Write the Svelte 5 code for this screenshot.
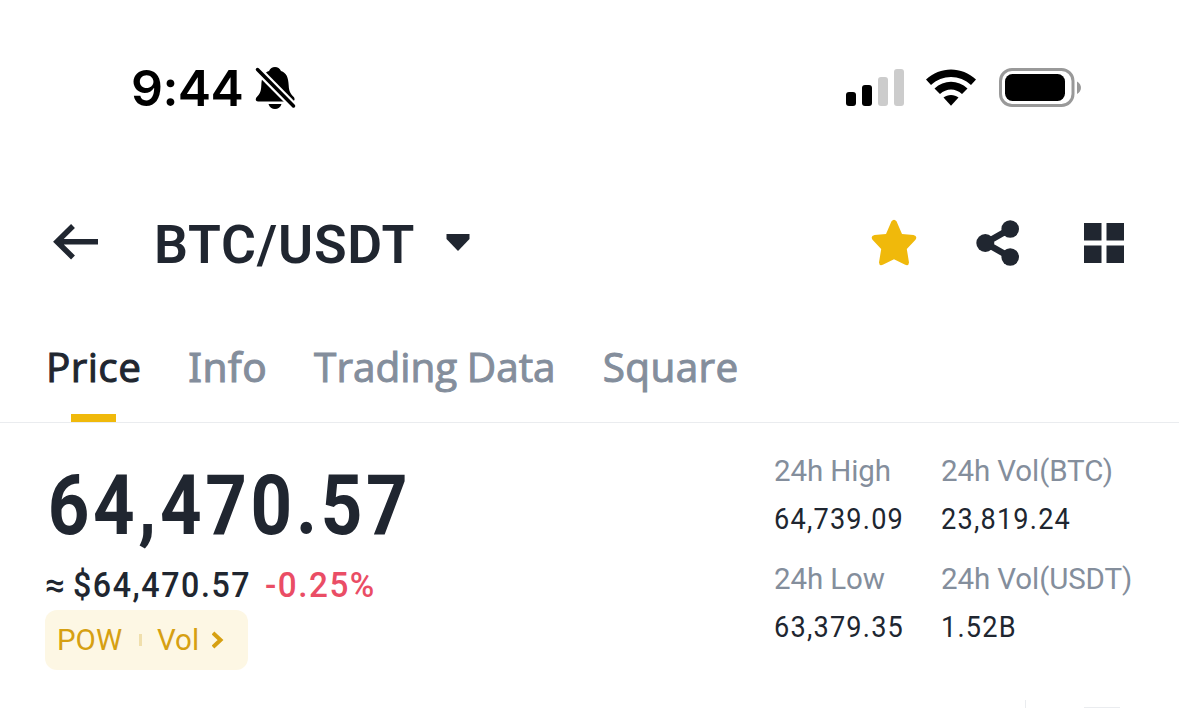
<script lang="ts">
  interface Stat { label: string; value: string; key: string }

  let activeTab = $state('Price')
  let favorite = $state(true)

  const tabs = ['Price', 'Info', 'Trading Data', 'Square']
  const stats: Stat[] = [
    { key: 'high', label: '24h High', value: '64,739.09' },
    { key: 'vol-btc', label: '24h Vol(BTC)', value: '23,819.24' },
    { key: 'low', label: '24h Low', value: '63,379.35' },
    { key: 'vol-usdt', label: '24h Vol(USDT)', value: '1.52B' },
  ]
</script>

<main class="screen">
  <div class="status-bar">
    <span class="time">9:44</span>
    <svg class="bell" width="42" height="46" viewBox="0 0 42 46">
      <path d="M3 36.500C0.500 36.500 0 34 2 31.800C5.500 28 6 26 6.300 20.500C6.700 12 8.500 8 14 6C15.300 3.300 17.200 2 20 2S24.700 3.300 26 6C31.500 8 33.300 12 33.700 20.500C34 26 35 28 38.500 31.800C40.500 34 39.500 36.500 37 36.500Z" />
      <path d="M13.500 39H26.500C25.500 42.500 23 44 20 44S14.500 42.500 13.500 39Z" />
      <path class="slash-gap" d="M1 3L39 41.500" />
      <path class="slash" d="M2.500 4.500L38.500 41" />
    </svg>
    <div class="device">
      <svg width="60" height="38" viewBox="0 0 60 38">
        <rect x="1" y="23" width="10" height="14" rx="3" />
        <rect x="17" y="16" width="10" height="21" rx="3" />
        <rect class="weak" x="33" y="8" width="10" height="29" rx="3" />
        <rect class="weak" x="49" y="0" width="10" height="37" rx="3" />
      </svg>
      <svg class="wifi" width="52" height="38" viewBox="0 0 52 38">
        <path d="M1 10.500C15 -3 37 -3 51 10.500L46 16C35 5.300 17 5.300 6 16Z" />
        <path d="M9.500 19.500C19 10.500 33 10.500 42.500 19.500L37 25C30.500 19 21.500 19 15 25Z" />
        <path d="M18.500 28.500C22.500 25 29.500 25 33.500 28.500L26 36.800Z" />
      </svg>
      <svg class="battery" width="84" height="40" viewBox="0 0 84 40">
        <rect class="shell" x="1.500" y="1.500" width="72.500" height="36" rx="11.500" />
        <rect x="6" y="6" width="60" height="27" rx="7.500" />
        <path class="cap" d="M78 13.500C83.300 16 83.300 23.500 78 26Z" />
      </svg>
    </div>
  </div>

  <header class="header">
    <button class="icon-button" type="button" aria-label="Back">
      <svg class="back" width="46" height="36" viewBox="0 0 46 36">
        <path d="M20 2L4 17.700L20 33.500M4 17.700H45" />
      </svg>
    </button>
    <button class="pair" type="button">
      <span class="pair-name">BTC/USDT</span>
      <svg width="24" height="20" viewBox="0 0 24 20">
        <path d="M0.500 1H23.500V6L12 18L0.500 6Z" />
      </svg>
    </button>
    <div class="actions">
      <button class="icon-button" class:favorite type="button" aria-label="Favorite" onclick={() => { favorite = !favorite }}>
        <svg width="46" height="48" viewBox="0 0 46 48">
          <path d="M20.500 2.300Q23 -0.800 25.500 2.300L31 15L42.500 16Q46.800 17 44.500 20.800L35.800 30L38 43.500Q37.700 47.200 34.200 45.800L23 40.200L11.800 45.800Q8.300 47.200 8 43.500L10.200 30L1.500 20.800Q-0.800 17 3.500 16L15 15Z" />
        </svg>
      </button>
      <button class="icon-button" type="button" aria-label="Share">
        <svg width="44" height="46" viewBox="0 0 44 46">
          <path class="link" d="M34 9L9.500 23L34 37" />
          <circle cx="34.200" cy="9" r="8.800" />
          <circle cx="9.300" cy="23" r="9" />
          <circle cx="34.200" cy="37" r="8.800" />
        </svg>
      </button>
      <button class="icon-button more" type="button" aria-label="More">
        <svg width="40" height="40" viewBox="0 0 40 40">
          <path d="M0 0H17.500V17.500H0ZM22.500 0H40V17.500H22.500ZM0 22.500H17.500V40H0ZM22.500 22.500H40V40H22.500Z" />
        </svg>
      </button>
    </div>
  </header>

  <nav class="tabs">
    {#each tabs as tab (tab)}
      <button
        class="tab"
        class:active={activeTab === tab}
        class:serif-i={tab.startsWith('I')}
        class:long={tab.length > 8}
        type="button"
        onclick={() => { activeTab = tab }}
      >{tab}</button>
    {/each}
  </nav>

  <section class="summary">
    <div class="quote">
      <div class="price">64,470.57</div>
      <div class="converted">
        <span class="approx">≈</span>
        <span class="fiat">$64,470.57</span>
        <span class="change">-0.25%</span>
      </div>
      <div class="tags">
        <span class="pow">POW</span>
        <span class="divider"></span>
        <span class="vol">Vol</span>
        <svg width="12" height="18" viewBox="0 0 12 18">
          <path d="M1 2L8.500 9L1 16" />
        </svg>
      </div>
    </div>
    <dl class="stats">
      {#each stats as stat (stat.key)}
        <div>
          <dt>{stat.label}</dt>
          <dd>{stat.value}</dd>
        </div>
      {/each}
    </dl>
  </section>

  <!-- top edge of the chart toolbar -->
  <div class="toolbar">
    <span class="toolbar-divider"></span>
    <span class="toolbar-icon"></span>
  </div>
</main>

<style>
  :global(body) {
    background: #fff;
  }
  .screen {
    display: flex;
    flex-direction: column;
    width: 1179px;
    height: 708px;
    overflow: hidden;
    background: #fff;
    color: #202630;
    font-family: Roboto, "Liberation Sans", sans-serif;
  }
  svg {
    display: block;
    flex-shrink: 0;
    fill: currentColor;
  }
  button {
    padding: 0;
    border: 0;
    background: none;
    color: inherit;
    font: inherit;
    cursor: pointer;
  }
  .status-bar {
    display: flex;
    align-items: center;
    height: 176px;
    padding: 0 96px 0 131px;
    box-sizing: border-box;
    color: #000;
  }
  .time {
    width: 124px;
    font: 600 50px/60px Inter, sans-serif;
    letter-spacing: -0.6px;
    white-space: nowrap;
  }
  .slash-gap, .slash {
    fill: none;
    stroke: #fff;
    stroke-width: 8;
  }
  .slash {
    stroke: #000;
    stroke-width: 3.5;
    stroke-linecap: round;
  }
  .device {
    display: flex;
    align-items: center;
    margin-left: auto;
  }
  .weak {
    fill: #ccc;
  }
  .wifi {
    margin-left: 20px;
  }
  .battery {
    margin-left: 22px;
  }
  .shell {
    fill: none;
    stroke: #999;
    stroke-width: 3;
  }
  .cap {
    fill: #999;
  }
  .header {
    display: flex;
    align-items: center;
    height: 136px;
    padding: 0 55px 0 53px;
  }
  .back {
    margin-bottom: 4px;
    fill: none;
    stroke: currentColor;
    stroke-width: 5.5;
  }
  .pair {
    display: flex;
    align-items: center;
    margin-left: 55px;
  }
  .pair svg {
    margin-bottom: 3px;
  }
  .pair-name {
    width: 292px;
    padding-top: 2px;
    font-size: 53.5px;
    font-weight: 600;
    line-height: 64px;
    text-align: left;
    letter-spacing: 0.8px;
  }
  .actions {
    display: flex;
    align-items: center;
    gap: 59px;
    margin-left: auto;
    margin-bottom: 2px;
  }
  .more {
    margin-left: 5px;
  }
  .favorite {
    color: #f0b90b;
  }
  .link {
    fill: none;
    stroke: currentColor;
    stroke-width: 6.5;
  }
  .tabs {
    display: flex;
    gap: 47px;
    height: 111px;
    padding-left: 46px;
    box-sizing: border-box;
    border-bottom: 1px solid #eaecef;
    font: 400 40.5px/109px "Open Sans", sans-serif;
    letter-spacing: 0.4px;
    color: #848e9c;
    -webkit-text-stroke: 1px;
  }
  .tab {
    display: flex;
    flex-direction: column;
    align-items: center;
    height: 110px;
    letter-spacing: inherit;
    white-space: nowrap;
  }
  /* Open Sans has a bare stem for the capital I */
  .serif-i {
    font-family: "Noto Sans", sans-serif;
  }
  .long {
    letter-spacing: 0;
    word-spacing: -1px;
  }
  .active {
    color: #202630;
  }
  .active::after {
    content: '';
    width: 45px;
    height: 8px;
    margin-top: -7px;
    background: #f0b90b;
  }
  .summary {
    display: flex;
    justify-content: space-between;
    height: 277px;
    padding: 0 44px 0 45px;
  }
  .quote {
    width: 400px;
    padding-top: 32px;
  }
  /* the figures are drawn narrow and loosely spaced */
  .price, .fiat, .change, dd {
    transform: scaleX(0.92);
    transform-origin: left;
  }
  .price {
    padding-left: 3px;
    font-size: 82.5px;
    font-weight: 700;
    line-height: 101px;
    letter-spacing: 4.2px;
    transform: scaleX(0.88);
  }
  .converted {
    display: flex;
    margin-top: 4px;
    font-size: 35px;
    font-weight: 500;
    line-height: 51px;
    white-space: nowrap;
  }
  .approx {
    width: 28px;
  }
  .fiat {
    width: 192px;
    letter-spacing: 1.7px;
  }
  .change {
    color: #ea4d65;
    letter-spacing: 1.6px;
    transform: scaleX(0.95);
  }
  .tags {
    display: flex;
    align-items: center;
    width: 203px;
    height: 60px;
    margin-top: -1px;
    padding-left: 12px;
    box-sizing: border-box;
    border-radius: 12px;
    background: #fdf7e4;
    color: #d6a012;
    font-size: 29.5px;
    line-height: 62px;
  }
  .pow {
    width: 82px;
  }
  .divider {
    width: 3px;
    height: 12px;
    background: #f0dfac;
  }
  .vol {
    width: 55px;
    margin-left: 15px;
  }
  .tags path {
    fill: none;
    stroke: currentColor;
    stroke-width: 4;
  }
  .stats {
    display: grid;
    grid-template-columns: 167px 194px;
    grid-auto-rows: 96px;
    row-gap: 12px;
    margin: 24px 0 0;
    font-size: 29.5px;
    line-height: 48px;
    white-space: nowrap;
  }
  dt {
    color: #848e9c;
    letter-spacing: -0.1px;
  }
  dd {
    margin: 0;
    letter-spacing: 1.3px;
  }
  .toolbar {
    display: flex;
    align-items: flex-end;
    justify-content: flex-end;
    height: 8px;
    padding-right: 59px;
  }
  .toolbar-divider {
    width: 1px;
    height: 8px;
    margin-right: 58px;
    background: #eaecef;
  }
  .toolbar-icon {
    width: 36px;
    height: 1px;
    background: #eaecef;
  }
</style>
